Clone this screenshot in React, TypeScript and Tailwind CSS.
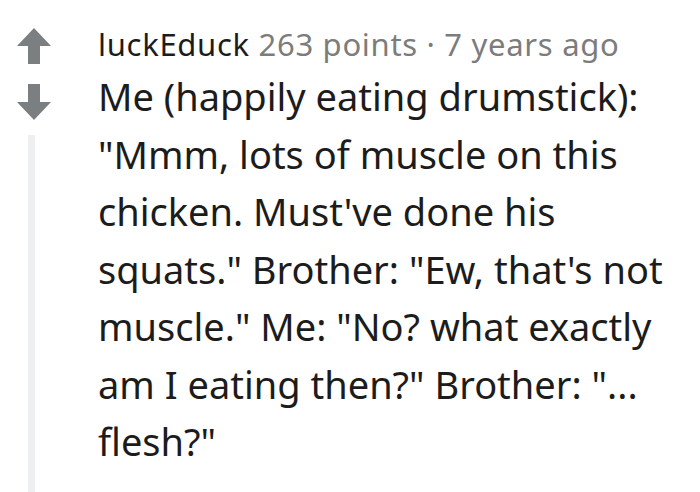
function VoteArrow({ down = false }: { down?: boolean }) {
  return (
    <svg width="36" height="38" viewBox="0 0 36 38" className={down ? 'rotate-180' : ''}>
      <path d="M18 1 L35 19 L24 19 L24 37 L12 37 L12 19 L1 19 Z" fill="#7c7f82" />
    </svg>
  )
}

export default function App() {
  return (
    <div className="w-[700px] h-[492px] bg-white overflow-hidden flex">
      <div className="w-[98px] shrink-0 flex flex-col items-start pl-[16px] pt-[27px]">
        <VoteArrow />
        <div className="h-[18px]" />
        <VoteArrow down />
        <div className="ml-[12px] mt-[14px] w-[7px] flex-1 bg-[#edeff1]" />
      </div>
      <div className="w-[600px] shrink-0 pt-[22px]">
        <div
          className="text-[31px] leading-[44px] tracking-[0.7px] whitespace-nowrap"
          style={{ fontFamily: '"Noto Sans", sans-serif' }}
        >
          <span className="text-[#1c1c1c]">luckEduck</span>{' '}
          <span className="text-[#7c7c7c]">263 points · 7 years ago</span>
        </div>
        <p
          className="text-[38px] leading-[57.5px] text-[#1c1c1c] mt-[2px]"
          style={{ fontFamily: '"Noto Sans", sans-serif' }}
        >
          Me (happily eating drumstick): "Mmm, lots of muscle on this chicken. Must've done his squats." Brother: "Ew, that's not muscle." Me: "No? what exactly am I eating then?" Brother: "... flesh?"
        </p>
      </div>
    </div>
  )
}
